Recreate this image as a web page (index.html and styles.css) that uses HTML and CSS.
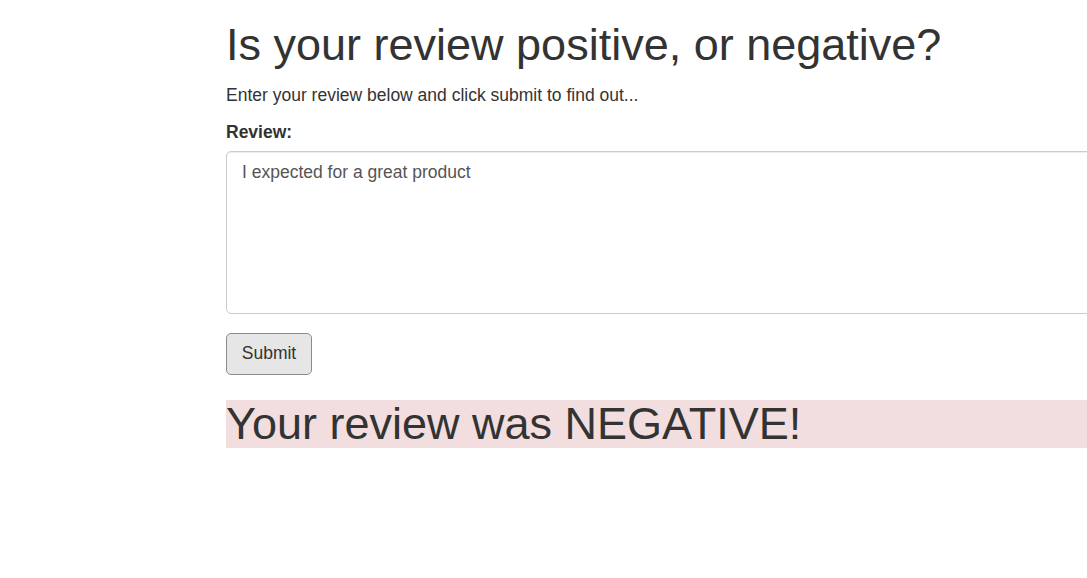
FILE: index.html
```html
<!DOCTYPE html>
<html lang="en">
<head>
<meta charset="utf-8">
<title>Review sentiment</title>
<link rel="stylesheet" href="styles.css">
</head>
<body>
<div class="page">
  <div class="container">
    <h1 class="title">Is your review positive, or negative?</h1>
    <p class="lead-text">Enter your review below and click submit to find out...</p>
    <form class="review-form">
      <label class="form-label" for="review">Review:</label>
      <textarea id="review" class="form-control">I expected for a great product</textarea>
      <button type="button" class="btn">Submit</button>
    </form>
    <h1 class="result">Your review was NEGATIVE!</h1>
  </div>
</div>
</body>
</html>
```
FILE: styles.css
```css
html, body {
  margin: 0;
  padding: 0;
  overflow: hidden;
  background: #fff;
}
body {
  font-family: "Liberation Sans", Arial, Helvetica, sans-serif;
  font-size: 17.5px;
  line-height: 1.43;
  color: #333;
}
.page {
  width: 1087px;
  height: 578px;
  overflow: hidden;
}
.container {
  padding-left: 226px;
  width: 1200px;
}
.title {
  font-size: 45px;
  font-weight: 500;
  line-height: 1.1;
  margin: 20px 0 13px;
}
.lead-text {
  margin: 0 0 12px;
}
.review-form {
  display: flex;
  flex-direction: column;
  align-items: flex-start;
}
.form-label {
  font-weight: 700;
  margin-bottom: 6px;
}
.form-control {
  box-sizing: border-box;
  width: 100%;
  height: 163px;
  padding: 8px 15px;
  font-family: inherit;
  font-size: 17.5px;
  line-height: 1.43;
  color: #555;
  border: 1px solid #ccc;
  border-radius: 5px;
  box-shadow: inset 0 1px 1px rgba(0,0,0,.075);
  resize: none;
  margin-bottom: 19px;
}
.btn {
  box-sizing: border-box;
  width: 86px;
  height: 42px;
  font-family: inherit;
  font-size: 17.5px;
  color: #333;
  background: #e6e6e6;
  border: 1px solid #8c8c8c;
  border-radius: 5px;
  padding: 0;
}
.result {
  font-size: 45px;
  font-weight: 500;
  line-height: 48px;
  margin: 25px 0 0;
  background: #f2dede;
}
```
